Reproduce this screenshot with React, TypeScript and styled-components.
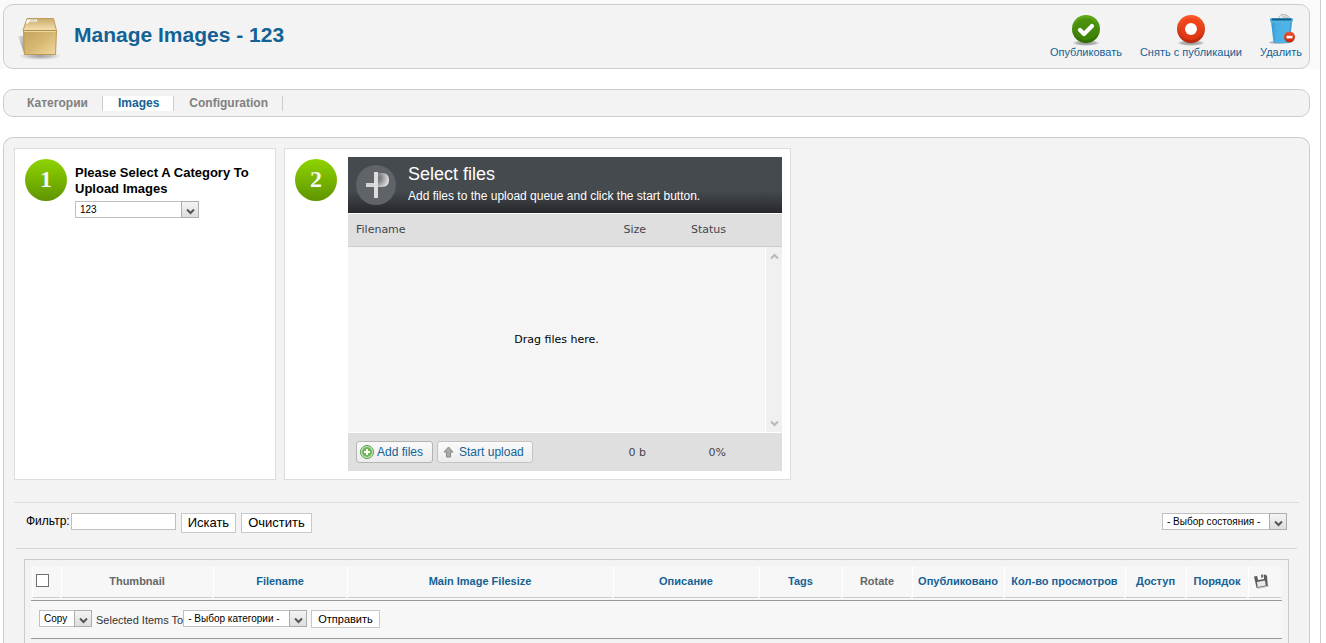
import React from 'react';
import styled, { createGlobalStyle } from 'styled-components';

const GlobalStyle = createGlobalStyle`
  * { box-sizing: border-box; }
  html, body { margin: 0; padding: 0; background: #fff; }
  body, button, input, select {
    font-family: "Liberation Sans", Arial, sans-serif;
    font-size: 12px;
    color: #000;
  }
  a { color: #146295; text-decoration: none; }
  h1, h2, p { margin: 0; }
`;

const Page = styled.div`
  display: flex;
  flex-direction: column;
  min-height: 100vh;
  margin-right: 5px;
  border-right: 1px solid #ccc;
`;

const HeaderBand = styled.div`
  background: #fafafa;
  padding: 4px 10px 0 3px;
  margin-bottom: 20px;
`;

const HeaderBox = styled.header`
  display: flex;
  align-items: center;
  justify-content: space-between;
  height: 65px;
  padding: 0 7px 0 11px;
  background: #f3f3f3;
  border: 1px solid #ccc;
  border-radius: 10px;
`;

const Brand = styled.div`
  display: flex;
  align-items: center;
  gap: 8px;
`;

const PageTitle = styled.h1`
  padding-bottom: 4px;
  font-size: 21px;
  line-height: 24px;
  color: #146295;
`;

const Toolbar = styled.nav`
  display: flex;
  gap: 18px;
  padding-bottom: 2px;
`;

const ToolLink = styled.a`
  display: flex;
  flex-direction: column;
  align-items: center;
  font-size: 11px;
  line-height: 12px;
`;

const Submenu = styled.nav`
  display: flex;
  align-items: center;
  height: 28px;
  margin: 0 10px 20px 3px;
  padding: 0 8px;
  background: #f3f3f3;
  border: 1px solid #ccc;
  border-radius: 10px;
`;

const Tab = styled.a<{ $active?: boolean }>`
  padding: 0 14px 0 15px;
  font-weight: bold;
  line-height: 15px;
  border-right: 1px solid #ccc;
  color: ${p => (p.$active ? '#146295' : '#808080')};
  background: ${p => (p.$active ? '#fff' : 'transparent')};
`;

const Content = styled.main`
  display: flex;
  flex-direction: column;
  flex: 1;
  margin: 0 10px 0 3px;
  padding: 10px 10px 0;
  background: #f3f3f3;
  border: 1px solid #ccc;
  border-bottom: 0;
  border-radius: 10px 10px 0 0;
`;

const Steps = styled.div`
  display: flex;
  gap: 8px;
  min-height: 332px;
  margin-bottom: 22px;
`;

const StepCard = styled.section<{ $width: number }>`
  display: flex;
  align-items: flex-start;
  width: ${p => p.$width}px;
  padding: 8px 8px 8px 10px;
  background: #fff;
  border: 1px solid #ddd;
`;

const StepNumber = styled.span`
  flex: none;
  width: 42px;
  height: 42px;
  margin: 2px 8px 0 0;
  border-radius: 50%;
  background: linear-gradient(#8fd400, #5f9400);
  color: #f6f6f6;
  font: bold 24px/40px "Liberation Serif", "Times New Roman", serif;
  text-align: center;
`;

const StepBody = styled.div`
  display: flex;
  flex-direction: column;
  gap: 4px;
  padding-top: 8px;
`;

const StepTitle = styled.label`
  font-size: 13px;
  font-weight: bold;
  line-height: 16px;
`;

const Uploader = styled.div`
  flex: 1;
  margin-left: 3px;
  font-family: "DejaVu Sans", Verdana, sans-serif;
  font-size: 11px;
  color: #42454a;
`;

const UploadHeader = styled.div`
  display: flex;
  gap: 12px;
  height: 56px;
  padding: 8px;
  background: linear-gradient(#454a4f 0%, #454a4f 60%, #26282b 100%);
  color: #fff;
  font-family: "Liberation Sans", Arial, sans-serif;
`;

const UploadTitle = styled.h2`
  font-size: 18px;
  font-weight: normal;
  line-height: 18px;
`;

const UploadHint = styled.p`
  font-size: 12px;
  line-height: 26px;
`;

const UploadRow = styled.div<{ $footer?: boolean }>`
  display: grid;
  grid-template-columns: 1fr 60px 80px;
  align-items: center;
  height: ${p => (p.$footer ? 39 : 34)}px;
  padding: ${p => (p.$footer ? '0' : '0 0 2px')};
  padding-left: 8px;
  padding-right: 56px;
  background: #dfdfdf;
  border-top: 1px solid #fff;
  border-bottom: ${p => (p.$footer ? '0' : '1px solid #ccc')};
`;

const Numeric = styled.span`
  text-align: right;
`;

const UploadList = styled.div`
  display: flex;
  height: 185px;
  background: #f5f5f5;
`;

const DropHint = styled.p`
  flex: 1;
  align-self: center;
  text-align: center;
  color: #000;
`;

const ScrollTrack = styled.div`
  display: flex;
  flex-direction: column;
  align-items: center;
  justify-content: space-between;
  width: 17px;
  padding: 5px 0 4px;
  background: #f0f0f0;
  border-left: 1px solid #fff;
`;

const ButtonRow = styled.div`
  display: flex;
  gap: 4px;
`;

const UploadButton = styled.button<{ $muted?: boolean }>`
  display: flex;
  align-items: center;
  gap: ${p => (p.$muted ? 5 : 3)}px;
  height: 22px;
  padding: ${p => (p.$muted ? '0 8px 0 5px' : '0 9px 0 3px')};
  border: 1px solid ${p => (p.$muted ? '#c4c4c4' : '#b4b4b4')};
  border-radius: 3px;
  background: linear-gradient(#fafafa, #ececec);
  color: #146295;
`;

const FilterBar = styled.div`
  display: flex;
  align-items: flex-start;
  justify-content: space-between;
  height: 46px;
  padding: 10px 12px 0 12px;
  border-top: 1px solid #ddd;
`;

const FilterGroup = styled.form`
  display: flex;
  align-items: flex-start;
  gap: 5px;
`;

const FilterLabel = styled.label`
  display: flex;
  gap: 1px;
  line-height: 16px;
`;

const TextInput = styled.input`
  width: 105px;
  height: 17px;
  padding: 0 2px;
  border: 1px solid #c0c0c0;
  background: #fff;
`;

const PlainButton = styled.button<{ $small?: boolean }>`
  height: ${p => (p.$small ? 18 : 20)}px;
  padding: 0 6px;
  border: 1px solid #c8c8c8;
  background: #fff;
  font-size: ${p => (p.$small ? 11 : 13)}px;
  line-height: 16px;
`;

const SelectWrap = styled.span<{ $width: number }>`
  display: grid;
  grid-template-columns: 1fr 18px;
  width: ${p => p.$width}px;
  height: 17px;
`;

const NativeSelect = styled.select`
  grid-area: 1 / 1 / 2 / 3;
  appearance: none;
  width: 100%;
  height: 17px;
  padding: 0 18px 0 4px;
  border: 1px solid #c0c0c0;
  border-radius: 0;
  background: #fff;
  font-size: 10px;
`;

const SelectArrow = styled.span`
  grid-area: 1 / 2 / 2 / 3;
  display: flex;
  align-items: center;
  justify-content: center;
  border: 1px solid #adadad;
  background: linear-gradient(#f4f4f4, #dedede);
  padding-top: 3px;
  pointer-events: none;
`;

const Panel = styled.div`
  flex: 1;
  margin: 0 10px;
  padding: 6px 6px 0;
  border: 1px solid #ccc;
  border-bottom: 0;
`;

const Divider = styled.hr`
  height: 1px;
  margin: 0 2px 10px;
  border: 0;
  background: #d6d6d6;
`;

const Table = styled.table`
  width: 100%;
  table-layout: fixed;
  border-spacing: 1px 0;
  background: #f7f7f7;
  color: #666;
  font-size: 11px;
`;

const HeadCell = styled.th`
  height: 32px;
  padding: 0 2px 2px;
  border-left: 1px solid #fff;
  border-bottom: 1px solid #ccc;
  white-space: nowrap;
  svg { display: block; margin-left: 2px; }
`;

const CheckBox = styled.input`
  appearance: none;
  display: block;
  width: 13px;
  height: 13px;
  margin: 0 auto 0 1px;
  border: 1px solid #707070;
  background: #fff;
  &:checked { background: #146295; }
`;

const BatchCell = styled.td`
  padding: 2px 0 0;
  > div {
    border-top: 1px solid #999;
    border-bottom: 1px solid #999;
    margin: 0 -1px;
  }
`;

const BatchForm = styled.div`
  display: flex;
  align-items: center;
  height: 39px;
  padding: 0 8px 2px;
  color: #333;
`;

const BatchText = styled.label`
  padding: 2px 0 0 4px;
`;

const BatchSubmit = styled(PlainButton)`
  margin-left: 4px;
`;

function Chevron({ up, color = '#555' }: { up?: boolean; color?: string }) {
  return (
    <svg width="9" height="9" viewBox="0 0 9 9" fill="none" stroke={color} strokeWidth="2">
      <path d={up ? 'M1 6.5 4.5 3 8 6.5' : 'M1 2.5 4.5 6 8 2.5'} />
    </svg>
  );
}

function Select({ id, label, width, text }: { id: string; label?: string; width: number; text: string }) {
  return (
    <SelectWrap $width={width}>
      <NativeSelect id={id} aria-label={label}>
        <option>{text}</option>
      </NativeSelect>
      <SelectArrow><Chevron /></SelectArrow>
    </SelectWrap>
  );
}

function BoxIcon() {
  return (
    <svg width="51" height="48" viewBox="0 0 51 48">
      <defs>
        <linearGradient id="boxFront" x1="0" y1="0" x2="1" y2="1">
          <stop offset="0" stopColor="#c6a35e" /><stop offset=".5" stopColor="#d6b772" /><stop offset="1" stopColor="#f0da9e" />
        </linearGradient>
        <linearGradient id="boxTop" x1="0" y1="0" x2="0" y2="1">
          <stop offset="0" stopColor="#c9ab6c" /><stop offset="1" stopColor="#f6e2b0" />
        </linearGradient>
        <linearGradient id="boxSide" x1="0" y1="0" x2="1" y2="1">
          <stop offset="0" stopColor="#e2e2e2" /><stop offset="1" stopColor="#999" />
        </linearGradient>
        <radialGradient id="boxShade">
          <stop offset="0" stopColor="#999" /><stop offset=".6" stopColor="#bbb" stopOpacity=".7" /><stop offset="1" stopColor="#ccc" stopOpacity="0" />
        </radialGradient>
      </defs>
      <ellipse cx="25" cy="43" rx="22" ry="4" fill="url(#boxShade)" />
      <path d="M3 23h6v17z" fill="url(#boxSide)" />
      <path d="M12 5.500h26.500l3 12h-33.500z" fill="url(#boxTop)" stroke="#c29c5a" />
      <path d="M8.500 17.500h33l-1 24h-31z" fill="url(#boxFront)" stroke="#bd9852" />
      <path d="M9 17.500h32" stroke="#a98747" strokeWidth=".6" />
      <path d="M9 18.500h32" stroke="#eed79f" />
      <path d="M12 6.500h10v2h-8l-1 2h-2z" fill="#fff" />
      <path d="M15 7h6" stroke="#bcc0c0" />
    </svg>
  );
}

function RoundIcon({ kind }: { kind: 'publish' | 'unpublish' }) {
  const ok = kind === 'publish';
  return (
    <svg width="32" height="32" viewBox="0 0 32 32">
      <defs>
        <linearGradient id={`${kind}Fill`} x1="0" y1="0" x2="0" y2="1">
          <stop offset="0" stopColor={ok ? '#63ab18' : '#ff5a2c'} />
          <stop offset="1" stopColor={ok ? '#2f6c00' : '#b9260b'} />
        </linearGradient>
        <radialGradient id={`${kind}Shade`}>
          <stop offset="0" stopColor="#888" /><stop offset=".7" stopColor="#aaa" stopOpacity=".8" /><stop offset="1" stopColor="#bbb" stopOpacity="0" />
        </radialGradient>
      </defs>
      <ellipse cx="16" cy="29" rx="14" ry="3" fill={`url(#${kind}Shade)`} />
      <circle cx="16" cy="15" r="14" fill={`url(#${kind}Fill)`} />
      <circle cx="16" cy="15" r="11" fill={ok ? '#438a08' : '#f03d16'} opacity=".6" />
      {ok
        ? <path d="M10 16 14 20 22 12" fill="none" stroke="#fff" strokeWidth="4.200" strokeLinecap="round" strokeLinejoin="round" />
        : <circle cx="16" cy="15" r="6" fill="#fff" />}
    </svg>
  );
}

function TrashIcon() {
  return (
    <svg width="32" height="32" viewBox="0 0 32 32">
      <defs>
        <linearGradient id="minusFill" x1="0" y1="0" x2="0" y2="1">
          <stop offset="0" stopColor="#f4532e" /><stop offset="1" stopColor="#bf2509" />
        </linearGradient>
        <linearGradient id="binFill" x1="0" y1="0" x2="1" y2="0">
          <stop offset="0" stopColor="#2f97d0" /><stop offset=".25" stopColor="#48afe4" /><stop offset=".85" stopColor="#4fb5e8" /><stop offset="1" stopColor="#2a8ec5" />
        </linearGradient>
      </defs>
      <ellipse cx="14" cy="28.500" rx="10" ry="1.500" fill="#b5b5b5" />
      <path d="M15 5c-2-2 0-4.500 3-4.500 4 0 7 2 6.500 5.500z" fill="#ececec" stroke="#b5b5b5" />
      <path d="M17 1.500 22 5.500M20 1.500 24 5" stroke="#aaa" />
      <path d="M6 7h21l-2 22h-16.500z" fill="url(#binFill)" />
      <path d="M5 5.500q0-1.500 2-1.500h19q2 0 2 1.500l-1 3.500h-21z" fill="#3a9fd6" />
      <path d="M7 5.500h19" stroke="#155b83" strokeWidth="1.600" />
      <path d="M6 8h21" stroke="#7ccbf0" strokeWidth=".8" />
      <circle cx="24.500" cy="23" r="5.500" fill="url(#minusFill)" />
      <rect x="21.500" y="21.800" width="6" height="2.600" fill="#fff" />
    </svg>
  );
}

function PlusLogo() {
  return (
    <svg width="40" height="40" viewBox="0 0 40 40">
      <defs>
        <radialGradient id="logoLoop" gradientUnits="userSpaceOnUse" cx="21" cy="13" r="13">
          <stop offset="0" stopColor="#6d7074" /><stop offset=".35" stopColor="#85888b" /><stop offset="1" stopColor="#f0f0f0" />
        </radialGradient>
      </defs>
      <circle cx="20" cy="20" r="20" fill="#606367" />
      <path d="M22 8h4q7 0 7 7t-7 7h-4z" fill="url(#logoLoop)" />
      <path d="M10 18h8v4h-8z" fill="#d4d5d6" />
      <path d="M18 7h4v26h-4z" fill="#dcdddd" />
    </svg>
  );
}

function AddIcon() {
  return (
    <svg width="14" height="14" viewBox="0 0 14 14">
      <circle cx="7" cy="7" r="6.500" fill="#cfe8c4" stroke="#56994d" />
      <circle cx="7" cy="7" r="5" fill="#6cb858" />
      <path d="M7 4v6M4 7h6" stroke="#fff" strokeWidth="2" />
    </svg>
  );
}

function UpIcon() {
  return (
    <svg width="11" height="12" viewBox="0 0 11 12">
      <path d="M5.500 1 10 6H7.500v5h-4V6H1z" fill="#aaa" stroke="#888" strokeLinejoin="round" />
    </svg>
  );
}

function SaveIcon() {
  return (
    <svg width="16" height="16" viewBox="0 0 16 16">
      <path d="M3 14.500 15 12l1 1.500-11 2.500z" fill="#c4c4c4" />
      <path d="M1 3.500 12 1.500l2 1.200.8 10L3.500 14.800z" fill="#5c5c5c" />
      <path d="M4 2.500 10.500 1.400l.6 4.600-6 1z" fill="#fafafa" />
      <path d="M8 1.800 9.600 1.500l.3 3-1.500.3z" fill="#4a4a4a" />
      <path d="M4 9 12 7.600l.8 4.800-8.200 1.500z" fill="#e8e8e8" />
    </svg>
  );
}

const columns: { label: string; width: number; sortable?: boolean }[] = [
  { label: 'Thumbnail', width: 151 },
  { label: 'Filename', width: 133, sortable: true },
  { label: 'Main Image Filesize', width: 265, sortable: true },
  { label: 'Описание', width: 145, sortable: true },
  { label: 'Tags', width: 82, sortable: true },
  { label: 'Rotate', width: 69 },
  { label: 'Опубликовано', width: 91, sortable: true },
  { label: 'Кол-во просмотров', width: 120, sortable: true },
  { label: 'Доступ', width: 60, sortable: true },
  { label: 'Порядок', width: 61, sortable: true },
];

export default function App() {
  return (
    <>
      <GlobalStyle />
      <Page>
        <HeaderBand>
          <HeaderBox>
            <Brand>
              <BoxIcon />
              <PageTitle>Manage Images - 123</PageTitle>
            </Brand>
            <Toolbar>
              <ToolLink href="#publish"><RoundIcon kind="publish" />Опубликовать</ToolLink>
              <ToolLink href="#unpublish"><RoundIcon kind="unpublish" />Снять с публикации</ToolLink>
              <ToolLink href="#delete"><TrashIcon />Удалить</ToolLink>
            </Toolbar>
          </HeaderBox>
        </HeaderBand>

        <Submenu>
          <Tab href="#categories">Категории</Tab>
          <Tab href="#images" $active>Images</Tab>
          <Tab href="#configuration">Configuration</Tab>
        </Submenu>

        <Content>
          <Steps>
            <StepCard $width={262}>
              <StepNumber>1</StepNumber>
              <StepBody>
                <StepTitle htmlFor="category">Please Select A Category To Upload Images</StepTitle>
                <Select id="category" width={124} text="123" />
              </StepBody>
            </StepCard>
            <StepCard $width={507}>
              <StepNumber>2</StepNumber>
              <Uploader>
                <UploadHeader>
                  <PlusLogo />
                  <div>
                    <UploadTitle>Select files</UploadTitle>
                    <UploadHint>Add files to the upload queue and click the start button.</UploadHint>
                  </div>
                </UploadHeader>
                <UploadRow>
                  <span>Filename</span>
                  <Numeric>Size</Numeric>
                  <Numeric>Status</Numeric>
                </UploadRow>
                <UploadList>
                  <DropHint>Drag files here.</DropHint>
                  <ScrollTrack>
                    <Chevron up color="#b8b8b8" />
                    <Chevron color="#b8b8b8" />
                  </ScrollTrack>
                </UploadList>
                <UploadRow $footer>
                  <ButtonRow>
                    <UploadButton type="button"><AddIcon />Add files</UploadButton>
                    <UploadButton type="button" $muted><UpIcon />Start upload</UploadButton>
                  </ButtonRow>
                  <Numeric>0 b</Numeric>
                  <Numeric>0%</Numeric>
                </UploadRow>
              </Uploader>
            </StepCard>
          </Steps>

          <FilterBar>
            <FilterGroup>
              <FilterLabel>Фильтр:<TextInput type="text" /></FilterLabel>
              <PlainButton type="button">Искать</PlainButton>
              <PlainButton type="button">Очистить</PlainButton>
            </FilterGroup>
            <Select id="state" label="Состояние" width={125} text="- Выбор состояния -" />
          </FilterBar>
          <Divider />

          <Panel>
            <Table>
              <colgroup>
                <col width={28} />
                {columns.map(c => <col key={c.label} width={c.width} />)}
                <col width={33} />
              </colgroup>
              <thead>
                <tr>
                  <HeadCell><CheckBox type="checkbox" aria-label="Все" /></HeadCell>
                  {columns.map(c => (
                    <HeadCell key={c.label}>
                      {c.sortable ? <a href="#sort">{c.label}</a> : c.label}
                    </HeadCell>
                  ))}
                  <HeadCell><SaveIcon /></HeadCell>
                </tr>
              </thead>
              <tbody>
                <tr>
                  <BatchCell colSpan={12}>
                    <BatchForm>
                      <Select id="action" label="Copy" width={53} text="Copy" />
                      <BatchText htmlFor="target">Selected Items To</BatchText>
                      <Select id="target" width={124} text="- Выбор категории -" />
                      <BatchSubmit type="button" $small>Отправить</BatchSubmit>
                    </BatchForm>
                  </BatchCell>
                </tr>
              </tbody>
            </Table>
          </Panel>
        </Content>
      </Page>
    </>
  );
}
